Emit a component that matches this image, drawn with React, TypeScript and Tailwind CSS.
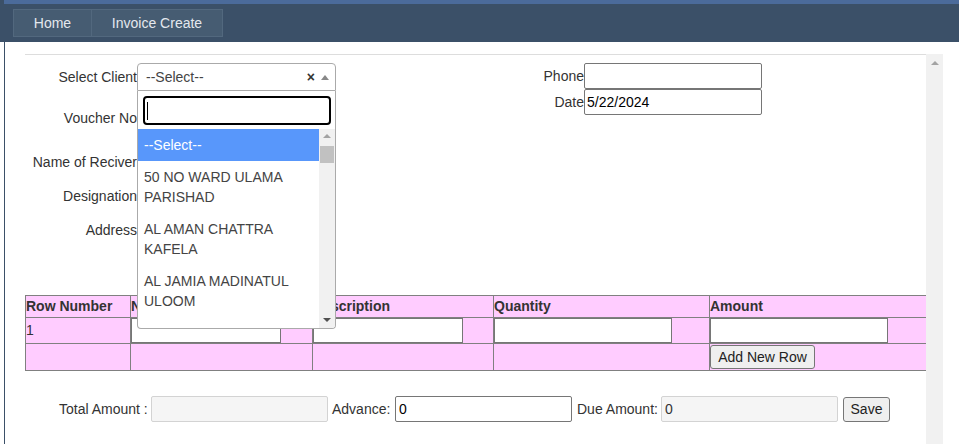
import React from 'react'

const clients = [
  '50 NO WARD ULAMA PARISHAD',
  'AL AMAN CHATTRA KAFELA',
  'AL JAMIA MADINATUL ULOOM',
  'AL HAMIDIA SHAHJALAL',
]

function Field({ label, mt, h }: { label: string; mt: string; h: string }) {
  return (
    <div className={`flex items-center ${mt} ${h}`}>
      <label className="w-[112px] text-right">{label}</label>
      <input className="w-[180px] h-[24px] border border-[#767676] rounded-[2px] bg-white" />
    </div>
  )
}

function ClientSelect() {
  return (
    <div className="relative z-10 w-[199px] h-[28px]">
      <div className="flex items-center h-[28px] border border-[#aaa] rounded-t-[4px] bg-white pl-[8px] pr-[6px] text-[#444]">
        <span className="flex-1">--Select--</span>
        <span className="font-bold text-[#333] text-[14px] mr-[6px] leading-none">×</span>
        <span className="w-0 h-0 border-x-[4px] border-b-[5px] border-x-transparent border-b-[#888]" />
      </div>
      <div className="absolute top-full left-0 w-[199px] bg-white border border-t-0 border-[#aaa] rounded-b-[4px] overflow-hidden">
        <div className="pl-[5px] pr-[4px] pt-[5px] pb-[4px]">
          <div className="flex items-center h-[29px] border-2 border-black rounded-[4px] pl-[2px]">
            <span className="w-px h-[18px] bg-black" />
          </div>
        </div>
        <div className="flex h-[199px] overflow-hidden">
          <ul className="w-[181px] text-[#444] leading-[20px]">
            <li className="px-[6px] py-[6px] bg-[#5897fb] text-white">--Select--</li>
            {clients.map((c) => (
              <li key={c} className="px-[6px] py-[6px]">{c}</li>
            ))}
          </ul>
          <div className="w-[16px] bg-[#f1f1f1] flex flex-col items-center">
            <span className="mt-[5px] w-0 h-0 border-x-[4px] border-b-[4px] border-x-transparent border-b-[#a3a3a3]" />
            <div className="mt-[8px] w-[14px] h-[17px] bg-[#c1c1c1]" />
            <div className="flex-1" />
            <span className="mb-[6px] w-0 h-0 border-x-[4px] border-t-[4px] border-x-transparent border-t-[#505050]" />
          </div>
        </div>
      </div>
    </div>
  )
}

export default function App() {
  return (
    <div className="w-[959px] h-[444px] overflow-hidden bg-white text-[14px] text-[#333] font-['Liberation_Sans',Arial,sans-serif]">
      <div className="flex h-[4px]">
        <div className="w-[4px] bg-[#3b5068]" />
        <div className="flex-1 bg-[#4b6b9b]" />
      </div>
      <nav className="h-[38px] bg-[#3b5068] flex items-start pt-[5px] pl-[13px]">
        <a className="w-[79px] h-[28px] flex items-center justify-center bg-[#465c72] border border-[#52687e] text-[#e4e8ee]">Home</a>
        <a className="w-[131px] h-[28px] flex items-center justify-center bg-[#465c72] border border-l-0 border-[#52687e] text-[#e4e8ee]">Invoice Create</a>
      </nav>

      <div className="flex h-[402px]">
        <div className="w-[4px]" />
        <div className="w-px bg-[#3b5068]" />
        <div className="w-[20px]" />
        <div className="flex pt-[12px]">
          <div className="w-[901px] border-t border-[#ddd]">
            <div className="flex h-[240px]">
              <div className="w-[455px] flex flex-col">
                <div className="flex items-center mt-[8px] h-[28px]">
                  <label className="w-[112px] text-right">Select Client</label>
                  <ClientSelect />
                </div>
                <Field label="Voucher No" mt="mt-[14px]" h="h-[26px]" />
                <Field label="Name of Reciver" mt="mt-[18px]" h="h-[26px]" />
                <Field label="Designation" mt="mt-[8px]" h="h-[26px]" />
                <Field label="Address" mt="mt-[8px]" h="h-[26px]" />
              </div>
              <div className="flex flex-col pt-[8px]">
                <div className="flex items-center h-[26px]">
                  <label className="w-[104px] text-right">Phone</label>
                  <input className="w-[178px] h-[26px] border border-[#767676] rounded-[2px] px-[2px]" />
                </div>
                <div className="flex items-center h-[26px]">
                  <label className="w-[104px] text-right">Date</label>
                  <input defaultValue="5/22/2024" className="w-[178px] h-[26px] border border-[#767676] rounded-[2px] px-[2px] text-black" />
                </div>
              </div>
            </div>

            <table className="w-[901px] table-fixed border-collapse bg-[#ffccff] border border-[#808080]">
              <colgroup>
                <col className="w-[105px]" />
                <col className="w-[182px]" />
                <col className="w-[181px]" />
                <col className="w-[216px]" />
                <col className="w-[217px]" />
              </colgroup>
              <thead>
                <tr className="h-[22px]">
                  <th className="border border-[#808080] p-0 text-left font-bold">Row Number</th>
                  <th className="border border-[#808080] p-0 text-left font-bold">Name</th>
                  <th className="border border-[#808080] p-0 text-left font-bold">Description</th>
                  <th className="border border-[#808080] p-0 text-left font-bold">Quantity</th>
                  <th className="border border-[#808080] p-0 text-left font-bold">Amount</th>
                </tr>
              </thead>
              <tbody>
                <tr className="h-[26px]">
                  <td className="border border-[#808080] p-0 align-middle">1</td>
                  <td className="border border-[#808080] p-0 align-top">
                    <input className="block w-[150px] h-[25px] border border-[#767676] bg-white" />
                  </td>
                  <td className="border border-[#808080] p-0 align-top">
                    <input className="block w-[150px] h-[25px] border border-[#767676] bg-white" />
                  </td>
                  <td className="border border-[#808080] p-0 align-top">
                    <input className="block w-[178px] h-[25px] border border-[#767676] bg-white" />
                  </td>
                  <td className="border border-[#808080] p-0 align-top">
                    <input className="block w-[178px] h-[25px] border border-[#767676] bg-white" />
                  </td>
                </tr>
                <tr className="h-[27px]">
                  <td className="border border-[#808080] p-0" />
                  <td className="border border-[#808080] p-0" />
                  <td className="border border-[#808080] p-0" />
                  <td className="border border-[#808080] p-0" />
                  <td className="border border-[#808080] p-0 align-bottom">
                    <button className="block w-[105px] h-[24px] mb-px bg-[#efefef] border border-[#767676] rounded-[3px] text-[#222]">Add New Row</button>
                  </td>
                </tr>
              </tbody>
            </table>

            <div className="mt-[25px] pl-[34px] flex items-center">
              <span className="w-[88px] whitespace-nowrap">Total Amount :</span>
              <input disabled className="ml-[4px] w-[177px] h-[26px] bg-[#f5f5f5] border border-[#d3d3d3] rounded-[2px]" />
              <span className="ml-[4px] w-[59px] whitespace-nowrap">Advance:</span>
              <input defaultValue="0" className="ml-[4px] w-[177px] h-[26px] border border-[#767676] rounded-[2px] px-[3px] text-black" />
              <span className="ml-[5px] w-[80px] whitespace-nowrap">Due Amount:</span>
              <input disabled defaultValue="0" className="ml-[4px] w-[177px] h-[26px] bg-[#f5f5f5] border border-[#d3d3d3] rounded-[2px] px-[3px] text-[#333]" />
              <button className="ml-[5px] w-[47px] h-[25px] bg-[#efefef] border border-[#767676] rounded-[3px] text-[#222]">Save</button>
            </div>
          </div>
          <div className="w-[17px] bg-[#f1f1f1] flex justify-center">
            <span className="mt-[7px] w-0 h-0 border-x-[4px] border-b-[4px] border-x-transparent border-b-[#a3a3a3]" />
          </div>
        </div>
      </div>
    </div>
  )
}
